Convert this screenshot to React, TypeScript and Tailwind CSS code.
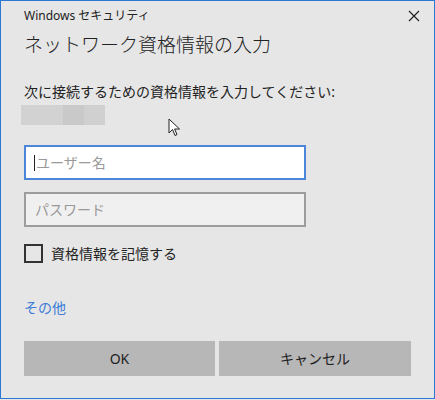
import React from "react";

export default function App() {
  const font = { fontFamily: '"Noto Sans", "Noto Sans CJK JP", sans-serif' };
  return (
    <div className="w-[435px] h-[400px] bg-[#e6e6e6]" style={font}>
      <div className="relative w-[435px] h-[399px] border border-[#2b78d6] bg-[#e6e6e6] text-[#1a1a1a]">
        <div className="pl-[23px] pr-[23px] flex flex-col">
          <div className="mt-[7px] flex items-center justify-between h-[16px]">
            <span className="text-[12px] leading-[16px] text-[#222]">Windows セキュリティ</span>
            <svg width="12" height="12" viewBox="0 0 12 12" className="mr-[-9px]">
              <path d="M1 1 L11 11 M11 1 L1 11" stroke="#222" strokeWidth="1.2" fill="none" />
            </svg>
          </div>
          <div className="mt-[8px] text-[19px] leading-[26px] text-[#222] font-light">ネットワーク資格情報の入力</div>
          <div className="mt-[24px] text-[14px] leading-[20px] text-[#222]">次に接続するための資格情報を入力してください:</div>
          <div className="mt-[3px] -ml-[3px] flex h-[20px]">
            <div className="w-[42px] bg-[#d2d2d2]" />
            <div className="w-[21px] bg-[#c9c9c9]" />
            <div className="w-[21px] bg-[#d0d0d0]" />
          </div>
          <div className="mt-[20px] w-[282px] h-[35px] border-2 border-[#4c86d9] bg-white flex items-center pl-[8px]">
            <div className="w-px h-[16px] bg-[#222] mr-[1px]" />
            <span className="text-[14px] text-[#9a9a9a]">ユーザー名</span>
          </div>
          <div className="mt-[12px] w-[282px] h-[35px] border-2 border-[#9c9c9c] bg-[#f0f0f0] flex items-center pl-[9px]">
            <span className="text-[14px] text-[#9a9a9a]">パスワード</span>
          </div>
          <div className="mt-[17px] flex items-center h-[19px]">
            <div className="w-[19px] h-[19px] border-2 border-[#333] bg-[#e6e6e6]" />
            <span className="ml-[8px] text-[14px] leading-[20px] text-[#222]">資格情報を記憶する</span>
          </div>
          <div className="mt-[35px] text-[14px] leading-[20px] text-[#3b7bd6]">その他</div>
          <div className="mt-[23px] flex gap-[4px]">
            <div className="w-[191px] h-[35px] bg-[#b7b7b7] flex items-center justify-center text-[14px] text-[#222]">OK</div>
            <div className="w-[192px] h-[35px] bg-[#b7b7b7] flex items-center justify-center text-[14px] text-[#222]">キャンセル</div>
          </div>
        </div>
        <svg className="absolute left-[167px] top-[117px]" width="14" height="20" viewBox="0 0 14 20">
          <path d="M1 1 L1 15 L4.5 11.5 L7 17.5 L9 16.6 L6.6 11 L11.5 11 Z" fill="#fff" stroke="#222" strokeWidth="1" strokeLinejoin="round" />
        </svg>
      </div>
    </div>
  );
}
